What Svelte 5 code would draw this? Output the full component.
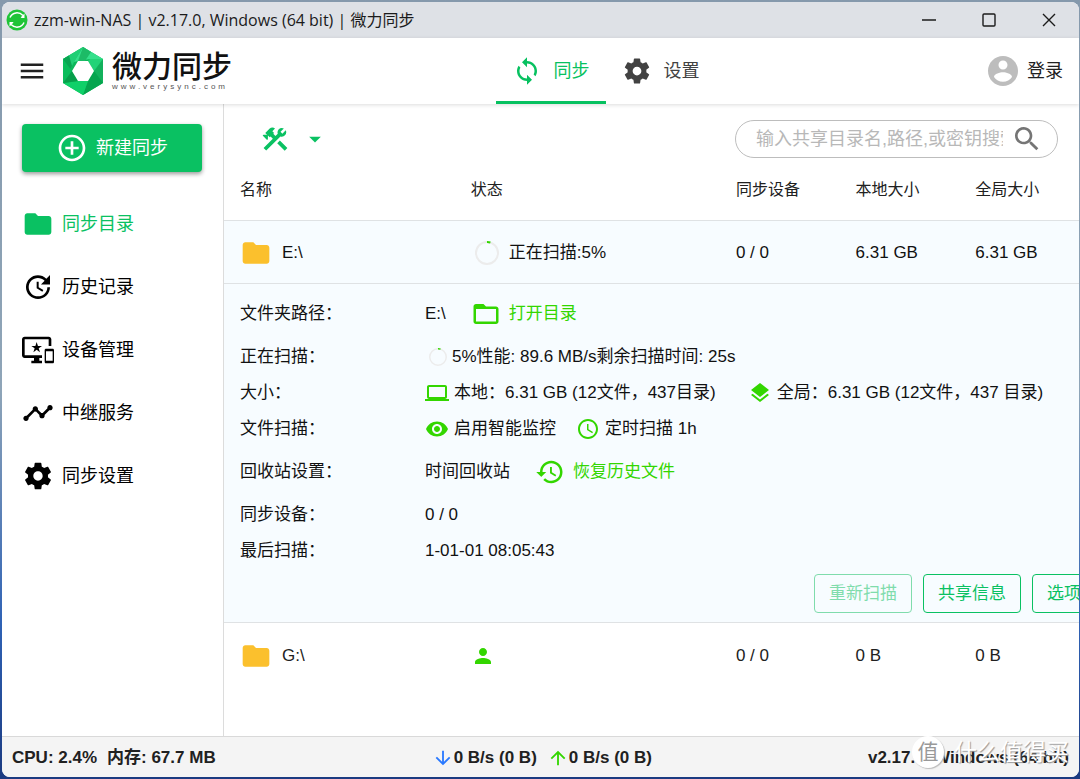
<script lang="ts">
	const icons = {
		menu: 'M3 18h18v-2H3v2zm0-5h18v-2H3v2zm0-7v2h18V6H3z',
		sync: 'M12 4V1L8 5l4 4V6c3.31 0 6 2.69 6 6 0 1.01-.25 1.97-.7 2.8l1.46 1.46C19.54 15.03 20 13.57 20 12c0-4.42-3.58-8-8-8zm0 14c-3.31 0-6-2.69-6-6 0-1.01.25-1.97.7-2.8L5.24 7.74C4.46 8.97 4 10.43 4 12c0 4.42 3.58 8 8 8v3l4-4-4-4v3z',
		settings: 'M19.43 12.98c.04-.32.07-.64.07-.98s-.03-.66-.07-.98l2.11-1.65c.19-.15.24-.42.12-.64l-2-3.46c-.12-.22-.39-.3-.61-.22l-2.49 1c-.52-.4-1.08-.73-1.69-.98l-.38-2.65C14.46 2.18 14.25 2 14 2h-4c-.25 0-.46.18-.49.42l-.38 2.65c-.61.25-1.17.59-1.69.98l-2.49-1c-.23-.09-.49 0-.61.22l-2 3.46c-.13.22-.07.49.12.64l2.11 1.65c-.04.32-.07.65-.07.98s.03.66.07.98l-2.11 1.65c-.19.15-.24.42-.12.64l2 3.46c.12.22.39.3.61.22l2.49-1c.52.4 1.08.73 1.69.98l.38 2.65c.03.24.24.42.49.42h4c.25 0 .46-.18.49-.42l.38-2.65c.61-.25 1.17-.59 1.69-.98l2.49 1c.23.09.49 0 .61-.22l2-3.46c.12-.22.07-.49-.12-.64l-2.11-1.65zM12 15.5c-1.93 0-3.5-1.57-3.5-3.5s1.57-3.5 3.5-3.5 3.5 1.57 3.5 3.5-1.57 3.5-3.5 3.5z',
		account: 'M12 2C6.48 2 2 6.48 2 12s4.48 10 10 10 10-4.48 10-10S17.52 2 12 2zm0 3c1.66 0 3 1.34 3 3s-1.34 3-3 3-3-1.34-3-3 1.34-3 3-3zm0 14.2c-2.5 0-4.71-1.28-6-3.22.03-1.99 4-3.08 6-3.08 1.99 0 5.97 1.09 6 3.08-1.29 1.94-3.5 3.22-6 3.22z',
		add: 'M13 7h-2v4H7v2h4v4h2v-4h4v-2h-4V7zm-1-5C6.48 2 2 6.48 2 12s4.48 10 10 10 10-4.48 10-10S17.52 2 12 2zm0 18c-4.41 0-8-3.59-8-8s3.59-8 8-8 8 3.59 8 8-3.59 8-8 8z',
		folder: 'M10 4H4c-1.1 0-1.99.9-1.99 2L2 18c0 1.1.9 2 2 2h16c1.1 0 2-.9 2-2V8c0-1.1-.9-2-2-2h-8l-2-2z',
		folderOpen: 'M20 6h-8l-2-2H4c-1.1 0-1.99.9-1.99 2L2 18c0 1.1.9 2 2 2h16c1.1 0 2-.9 2-2V8c0-1.1-.9-2-2-2zm0 12H4V8h16v10z',
		update: 'M21 10.12h-6.78l2.74-2.82c-2.73-2.7-7.15-2.8-9.88-.1-2.73 2.71-2.73 7.08 0 9.79s7.15 2.71 9.88 0C18.32 15.65 19 14.08 19 12.1h2c0 1.98-.88 4.55-2.64 6.29-3.51 3.48-9.21 3.48-12.72 0-3.5-3.47-3.53-9.11-.02-12.58s9.14-3.47 12.65 0L21 3v7.12zM12.5 8v4.25l3.5 2.08-.72 1.21L11 13V8h1.5z',
		devices: 'M23 11.01L18 11c-.55 0-1 .45-1 1v9c0 .55.45 1 1 1h5c.55 0 1-.45 1-1v-9c0-.55-.45-.99-1-.99zM23 20h-5v-7h5v7zM20 2H2C.89 2 0 2.89 0 4v12c0 1.1.89 2 2 2h7v2H7v2h8v-2h-2v-2h2v-2H2V4h18v5h2V4c0-1.11-.9-2-2-2zm-8.03 7L11 6l-.97 3H7l2.47 1.76-.94 2.91 2.47-1.8 2.47 1.8-.94-2.91L15 9h-3.03z',
		timeline: 'M23 8c0 1.1-.9 2-2 2-.18 0-.35-.02-.51-.07l-3.56 3.55c.05.16.07.34.07.52 0 1.1-.9 2-2 2s-2-.9-2-2c0-.18.02-.36.07-.52l-2.55-2.55c-.16.05-.34.07-.52.07s-.36-.02-.52-.07l-4.55 4.56c.05.16.07.33.07.51 0 1.1-.9 2-2 2s-2-.9-2-2 .9-2 2-2c.18 0 .35.02.51.07l4.56-4.55C8.02 9.36 8 9.18 8 9c0-1.1.9-2 2-2s2 .9 2 2c0 .18-.02.36-.07.52l2.55 2.55c.16-.05.34-.07.52-.07s.36.02.52.07l3.55-3.56C19.02 8.35 19 8.18 19 8c0-1.1.9-2 2-2s2 .9 2 2z',
		search: 'M15.5 14h-.79l-.28-.27C15.41 12.59 16 11.11 16 9.5 16 5.91 13.09 3 9.5 3S3 5.91 3 9.5 5.91 16 9.5 16c1.61 0 3.09-.59 4.23-1.57l.27.28v.79l5 4.99L20.49 19l-4.99-5zm-6 0C7.01 14 5 11.99 5 9.5S7.01 5 9.5 5 14 7.01 14 9.5 11.99 14 9.5 14z',
		tools: 'M13.78 15.3L19.78 21.3L21.89 19.14L15.89 13.14L13.78 15.3M17.5 10.1C17.11 10.1 16.69 10.05 16.36 9.91L4.97 21.25L2.86 19.14L10.27 11.74L8.5 9.96L7.78 10.66L6.33 9.25V12.11L5.63 12.81L2.11 9.25L2.81 8.55H5.62L4.22 7.14L7.78 3.58C8.95 2.41 10.83 2.41 12 3.58L9.89 5.74L11.3 7.14L10.59 7.85L12.38 9.63L14.2 7.75C14.06 7.42 14 7 14 6.63C14 4.66 15.56 3.11 17.5 3.11C18.09 3.11 18.61 3.25 19.08 3.53L16.41 6.2L17.91 7.7L20.58 5.03C20.86 5.5 21 6 21 6.63C21 8.55 19.45 10.1 17.5 10.1Z',
		caret: 'M7 10l5 5 5-5z',
		laptop: 'M20 18c1.1 0 1.99-.9 1.99-2L22 6c0-1.1-.9-2-2-2H4c-1.1 0-2 .9-2 2v10c0 1.1.9 2 2 2H0v2h24v-2h-4zM4 6h16v10H4V6z',
		layers: 'M11.99 18.54l-7.37-5.73L3 14.07l9 7 9-7-1.63-1.27-7.38 5.74zM12 16l7.36-5.73L21 9l-9-7-9 7 1.63 1.27L12 16z',
		eye: 'M12 4.5C7 4.5 2.73 7.61 1 12c1.73 4.39 6 7.5 11 7.5s9.27-3.11 11-7.5c-1.73-4.39-6-7.5-11-7.5zM12 17c-2.76 0-5-2.24-5-5s2.24-5 5-5 5 2.24 5 5-2.24 5-5 5zm0-8c-1.66 0-3 1.34-3 3s1.34 3 3 3 3-1.34 3-3-1.34-3-3-3z',
		clock: 'M11.99 2C6.47 2 2 6.48 2 12s4.47 10 9.99 10C17.52 22 22 17.52 22 12S17.52 2 11.99 2zM12 20c-4.42 0-8-3.58-8-8s3.58-8 8-8 8 3.58 8 8-3.58 8-8 8zm.5-13H11v6l5.25 3.15.75-1.23-4.5-2.67z',
		history: 'M13 3c-4.97 0-9 4.03-9 9H1l3.89 3.89.07.14L9 12H6c0-3.87 3.13-7 7-7s7 3.13 7 7-3.13 7-7 7c-1.93 0-3.68-.79-4.94-2.06l-1.42 1.42C8.27 19.99 10.51 21 13 21c4.97 0 9-4.03 9-9s-4.03-9-9-9zm-1 5v5l4.28 2.54.72-1.21-3.5-2.08V8H12z',
		person: 'M12 12c2.21 0 4-1.79 4-4s-1.79-4-4-4-4 1.79-4 4 1.79 4 4 4zm0 2c-2.67 0-8 1.34-8 4v2h16v-2c0-2.66-5.33-4-8-4z',
		down: 'M20 12l-1.41-1.41L13 16.17V4h-2v12.17l-5.58-5.59L4 12l8 8 8-8z',
		up: 'M4 12l1.41 1.41L11 7.83V20h2V7.83l5.58 5.59L20 12l-8-8-8 8z'
	};

	type IconName = keyof typeof icons;

	const menu: { icon: IconName; label: string }[] = [
		{ icon: 'folder', label: '同步目录' },
		{ icon: 'update', label: '历史记录' },
		{ icon: 'devices', label: '设备管理' },
		{ icon: 'timeline', label: '中继服务' },
		{ icon: 'settings', label: '同步设置' }
	];

	const columns = ['名称', '状态', '同步设备', '本地大小', '全局大小'];

	let active = $state('同步目录');
	let query = $state('');
</script>

{#snippet icon(name: IconName, size: number)}
	<svg class="icon" width={size} height={size} viewBox="0 0 24 24" aria-hidden="true">
		<path d={icons[name]} />
	</svg>
{/snippet}

{#snippet spinner(size: number)}
	<svg class="spinner" width={size} height={size} viewBox="0 0 24 24" aria-hidden="true">
		<circle cx="12" cy="12" r="11" />
		<path d="M12 1a11 11 0 0 1 3.4.5" />
	</svg>
{/snippet}

<div class="desktop">
	<div class="window">
		<div class="titlebar">
			<svg width="22" height="22" viewBox="0 0 22 22" aria-hidden="true">
				<circle cx="11" cy="11" r="10.5" fill="#1fc437" />
				<path d="M4 8.500C6.500 3 13 2.500 17 6.500M18 13.500C15.500 19 9 19.500 5 15.500" fill="none" stroke="#fff" stroke-width="1.500" />
				<path d="M18.500 4.500v4.500h-4.500zM3.500 17.500v-4.500h4.500z" fill="#fff" />
				<path d="M6 10c1-3 3-4 5.500-4 2 0 3 .8 4 2l-2 2h3v2c-1 3-3 4-5.500 4-2 0-3-.8-4-2l2-2H6z" fill="#1fc437" />
			</svg>
			<span class="title">zzm-win-NAS | v2.17.0, Windows (64 bit) | 微力同步</span>
			<button class="caption" aria-label="最小化">
				<svg width="14" height="14" viewBox="0 0 14 14"><path d="M0 7h14" /></svg>
			</button>
			<button class="caption" aria-label="最大化">
				<svg width="14" height="14" viewBox="0 0 14 14"><rect x="1" y="1" width="12" height="12" rx="1" /></svg>
			</button>
			<button class="caption" aria-label="关闭">
				<svg width="14" height="14" viewBox="0 0 14 14"><path d="M1 1l12 12M13 1L1 13" /></svg>
			</button>
		</div>

		<header>
			<button class="menu" aria-label="菜单">{@render icon('menu', 30)}</button>
			<a class="brand" href="#home">
				<svg width="42" height="48" viewBox="0 0 42 48" aria-hidden="true">
					<path d="M21 0L1 12v24l20 12 20-12V12z" fill="#0bb759" />
					<path d="M1 12L21 0 12 15 6 27z" fill="#1fcf74" />
					<path d="M1 12L7 8.500 10 19 6 27z" fill="#0aa552" />
					<path d="M21 0l20 12H28L16 14l-4 1z" fill="#35e08b" />
					<path d="M21 0l8 5-6 9h-7z" fill="#1dbb66" />
					<path d="M41 12v24l-9-12-5-10z" fill="#12b15c" />
					<path d="M41 12H28l-2 2 6 10z" fill="#22d377" />
					<path d="M41 36L21 48l5-14 6-10z" fill="#05a54e" />
					<path d="M21 48L1 36l15-2h10z" fill="#0fd068" />
					<path d="M1 36V12l9 12 6 10z" fill="#0abd5b" />
					<path d="M1 36l9-12 6 10z" fill="#079e4a" />
					<path d="M16 14h10l6 10-6 10H16l-6-10z" fill="#fff" />
				</svg>
				<span class="name">
					<strong>微力同步</strong>
					<small>www.verysync.com</small>
				</span>
			</a>
			<nav class="tabs">
				<a class="current" href="#sync">{@render icon('sync', 30)}同步</a>
				<a href="#settings">{@render icon('settings', 30)}设置</a>
			</nav>
			<button class="login">{@render icon('account', 36)}登录</button>
		</header>

		<div class="body">
			<aside>
				<button class="create">{@render icon('add', 32)}新建同步</button>
				<nav class="side">
					{#each menu as item}
						<a href="#{item.icon}" class:active={active === item.label} onclick={() => (active = item.label)}>
							{@render icon(item.icon, 32)}{item.label}
						</a>
					{/each}
				</nav>
			</aside>

			<main>
				<div class="toolbar">
					<button class="tools" aria-label="工具">
						{@render icon('tools', 30)}
						{@render icon('caret', 28)}
					</button>
					<label class="search">
						<input type="text" placeholder="输入共享目录名,路径,或密钥搜索" aria-label="搜索" bind:value={query} />
						{@render icon('search', 32)}
					</label>
				</div>

				<table>
					<thead>
						<tr>
							{#each columns as column}
								<th>{column}</th>
							{/each}
						</tr>
					</thead>
					<tbody>
						<tr class="open">
							<td><div class="cell folder">{@render icon('folder', 32)}E:\</div></td>
							<td><div class="cell status">{@render spinner(24)}正在扫描:5%</div></td>
							<td>0 / 0</td>
							<td>6.31 GB</td>
							<td>6.31 GB</td>
						</tr>
						<tr class="open">
							<td class="details" colspan="5">
								<dl>
									<div class="tall">
										<dt>文件夹路径：</dt>
										<dd>E:\ <a href="#open">{@render icon('folderOpen', 30)}打开目录</a></dd>
									</div>
									<div>
										<dt>正在扫描：</dt>
										<dd><span class="item scan">{@render spinner(18)}5%性能: 89.6 MB/s剩余扫描时间: 25s</span></dd>
									</div>
									<div>
										<dt>大小：</dt>
										<dd class="sizes">
											<span class="item">{@render icon('laptop', 24)}本地：6.31 GB (12文件，437目录)</span>
											<span class="item">{@render icon('layers', 24)}全局：6.31 GB (12文件，437 目录)</span>
										</dd>
									</div>
									<div>
										<dt>文件扫描：</dt>
										<dd>
											<span class="item">{@render icon('eye', 24)}启用智能监控</span>
											<span class="item">{@render icon('clock', 24)}定时扫描 1h</span>
										</dd>
									</div>
									<div class="tall">
										<dt>回收站设置：</dt>
										<dd>时间回收站 <a href="#restore">{@render icon('history', 30)}恢复历史文件</a></dd>
									</div>
									<div>
										<dt>同步设备：</dt>
										<dd>0 / 0</dd>
									</div>
									<div>
										<dt>最后扫描：</dt>
										<dd>1-01-01 08:05:43</dd>
									</div>
								</dl>
								<div class="actions">
									<button disabled>重新扫描</button>
									<button>共享信息</button>
									<button>选项{@render icon('caret', 24)}</button>
								</div>
							</td>
						</tr>
						<tr>
							<td><div class="cell folder">{@render icon('folder', 32)}G:\</div></td>
							<td><div class="cell online">{@render icon('person', 24)}</div></td>
							<td>0 / 0</td>
							<td>0 B</td>
							<td>0 B</td>
						</tr>
					</tbody>
				</table>
			</main>
		</div>

		<footer>
			<div class="usage"><span>CPU: 2.4%</span><span>内存: 67.7 MB</span></div>
			<div class="rates">
				<span class="down">{@render icon('down', 22)}<b>0 B/s (0 B)</b></span>
				<span class="up">{@render icon('up', 22)}<b>0 B/s (0 B)</b></span>
			</div>
			<div>v2.17.0, Windows (64 bit)</div>
			<div class="watermark"><span class="seal">值</span>什么值得买</div>
		</footer>
	</div>
</div>

<style>
	:global(body) {
		margin: 0;
		background: #1c3f8c;
	}

	.desktop {
		display: flex;
		box-sizing: border-box;
		min-height: 100vh;
		padding: 2px 1px 2px 2px;
		background: linear-gradient(180deg, #8599ac 0%, #8fa5b8 50%, #2f62b5 80%, #1b3a80 100%);
		color: #212121;
		font-family: "Liberation Sans", "Noto Sans CJK SC", sans-serif;
		font-size: 17px;
		line-height: 24px;
	}

	.window {
		display: flex;
		flex: 1;
		flex-direction: column;
		min-width: 0;
		overflow: hidden;
		border-radius: 8px;
		background: #fff;
	}

	button {
		padding: 0;
		border: 0;
		background: none;
		color: inherit;
		font: inherit;
		cursor: pointer;
	}

	a {
		color: inherit;
		text-decoration: none;
	}

	.icon {
		flex: none;
		fill: currentColor;
	}

	/* Title bar */
	.titlebar {
		display: flex;
		align-items: center;
		height: 36px;
		padding-left: 4px;
		background: #dee1e6;
		color: #1b1b1b;
		font-family: "Open Sans", "Noto Sans CJK SC", sans-serif;
		font-size: 16px;
	}

	.title {
		flex: 1;
		padding-left: 6px;
	}

	.caption {
		display: flex;
		align-items: center;
		justify-content: center;
		width: 60px;
		height: 36px;
	}

	.caption svg {
		fill: none;
		stroke: #1b1b1b;
		stroke-width: 1.4;
	}

	/* Header */
	header {
		display: flex;
		align-items: stretch;
		height: 66px;
		padding: 0 16px 0 15px;
		box-shadow: 0 1px 4px rgba(0, 0, 0, 0.14);
		font-size: 18px;
		z-index: 1;
	}

	.menu,
	.brand,
	.login,
	.tabs a {
		display: flex;
		align-items: center;
	}

	.brand {
		gap: 8px;
		margin-left: 15px;
		color: #111;
	}

	.name {
		display: flex;
		flex-direction: column;
	}

	.name strong {
		font-size: 30px;
		font-weight: 500;
		line-height: 32px;
	}

	.name small {
		color: #555;
		font-size: 8px;
		letter-spacing: 3px;
		line-height: 8px;
	}

	.tabs {
		display: flex;
		margin: 0 auto;
	}

	.tabs a {
		gap: 12px;
		padding: 0 16px;
		border-bottom: 3px solid transparent;
		border-top: 3px solid transparent;
		color: #424242;
	}

	.tabs .current {
		border-bottom-color: #07c160;
		color: #07c160;
	}

	.login {
		gap: 6px;
		margin-left: 6px;
	}

	.login .icon {
		color: #bdbdbd;
	}

	/* Layout */
	.body {
		display: flex;
		flex: 1;
	}

	aside {
		flex: none;
		box-sizing: border-box;
		width: 222px;
		padding: 20px 21px 0 20px;
		border-right: 1px solid #dcdcdc;
		color: #000;
		font-size: 18px;
	}

	.create {
		display: flex;
		align-items: center;
		justify-content: center;
		gap: 8px;
		width: 100%;
		height: 48px;
		border-radius: 4px;
		background: #0ac162;
		box-shadow: 0 2px 4px rgba(0, 0, 0, 0.4);
		color: #fff;
	}

	.side {
		margin-top: 20px;
	}

	.side a {
		display: flex;
		align-items: center;
		gap: 8px;
		height: 63px;
	}

	.side .active {
		color: #0ac162;
	}

	main {
		flex: 1;
		min-width: 0;
		overflow: hidden;
	}

	.toolbar {
		display: flex;
		align-items: center;
		justify-content: space-between;
		padding: 16px 21px 0 36px;
	}

	.tools {
		display: flex;
		align-items: center;
		gap: 11px;
		color: #0ac162;
	}

	.search {
		display: flex;
		align-items: center;
		box-sizing: border-box;
		width: 323px;
		height: 38px;
		padding: 0 14px 0 20px;
		border: 1px solid #bdbdbd;
		border-radius: 20px;
		color: #757575;
	}

	.search input {
		flex: 1;
		min-width: 0;
		margin-right: 8px;
		padding: 0;
		border: 0;
		outline: 0;
		background: none;
		color: #212121;
		font: inherit;
		font-size: 18px;
	}

	.search input::placeholder {
		color: #b8b8b8;
	}

	/* Folder table */
	table {
		width: 100%;
		border-collapse: separate;
		border-spacing: 0;
		table-layout: fixed;
	}

	th,
	td {
		box-sizing: border-box;
		height: 63px;
		padding: 2px 0 0 16px;
		border-bottom: 1px solid #dfe2e4;
		text-align: left;
	}

	th {
		font-size: 16px;
		font-weight: 400;
	}

	th:nth-child(1) {
		width: 27%;
	}

	th:nth-child(2) {
		width: 31%;
	}

	th:nth-child(3),
	th:nth-child(4),
	th:nth-child(5) {
		width: 14%;
	}

	tbody tr:last-child td {
		border-bottom: 0;
	}

	.open {
		background: #f7fcff;
		color: #111;
	}

	.cell {
		display: flex;
		align-items: center;
		gap: 10px;
	}

	.folder .icon {
		color: #fbc02d;
	}

	.status {
		padding-left: 4px;
	}

	.online {
		color: #33d600;
	}

	.spinner {
		flex: none;
		fill: none;
		stroke: #ececec;
		stroke-width: 2;
	}

	.spinner path {
		stroke: #33d600;
	}

	.details {
		padding-top: 5px;
	}

	dl {
		margin: 0;
	}

	dl div {
		display: grid;
		grid-template-columns: 185px 1fr;
		align-items: center;
		height: 36px;
	}

	dl .tall {
		height: 50px;
	}

	dd {
		display: flex;
		align-items: center;
		gap: 20px;
		margin: 0;
		white-space: nowrap;
	}

	.tall dd {
		gap: 25px;
	}

	.sizes {
		gap: 32px;
	}

	dd a,
	.item {
		display: flex;
		align-items: center;
		gap: 5px;
	}

	dd a {
		gap: 8px;
		color: #33d600;
	}

	dd .icon {
		color: #33d600;
	}

	.scan {
		padding-left: 4px;
	}

	.actions {
		display: flex;
		justify-content: flex-end;
		gap: 11px;
		margin: 5px -41px 9px 0;
	}

	.actions button {
		display: flex;
		align-items: center;
		height: 39px;
		padding: 0 14px;
		border: 1px solid #0ac162;
		border-radius: 4px;
		color: #0ac162;
	}

	.actions button:disabled {
		border-color: #7fdcac;
		color: #7fdcac;
	}

	/* Status bar */
	footer {
		position: relative;
		display: flex;
		align-items: center;
		justify-content: space-between;
		box-sizing: border-box;
		height: 41px;
		padding: 2px 10px 0;
		border-top: 1px solid #d9d9d9;
		background: #f4f4f4;
		font-weight: 700;
	}

	.usage,
	.rates,
	.rates span {
		display: flex;
		align-items: center;
	}

	.usage,
	.rates {
		gap: 10px;
	}

	.down .icon {
		color: #2979ff;
	}

	.up .icon {
		color: #33d600;
	}

	.watermark {
		position: absolute;
		right: 10px;
		bottom: 9px;
		display: flex;
		align-items: center;
		gap: 10px;
		color: #fff;
		font-size: 23px;
		font-weight: 400;
		line-height: 32px;
		text-shadow: 1px 1px 1px #999;
	}

	.seal {
		width: 32px;
		height: 32px;
		border-radius: 50%;
		background: #fff;
		box-shadow: 1px 1px 1px #bbb;
		color: #999;
		font-size: 21px;
		text-align: center;
		text-shadow: none;
	}
</style>
